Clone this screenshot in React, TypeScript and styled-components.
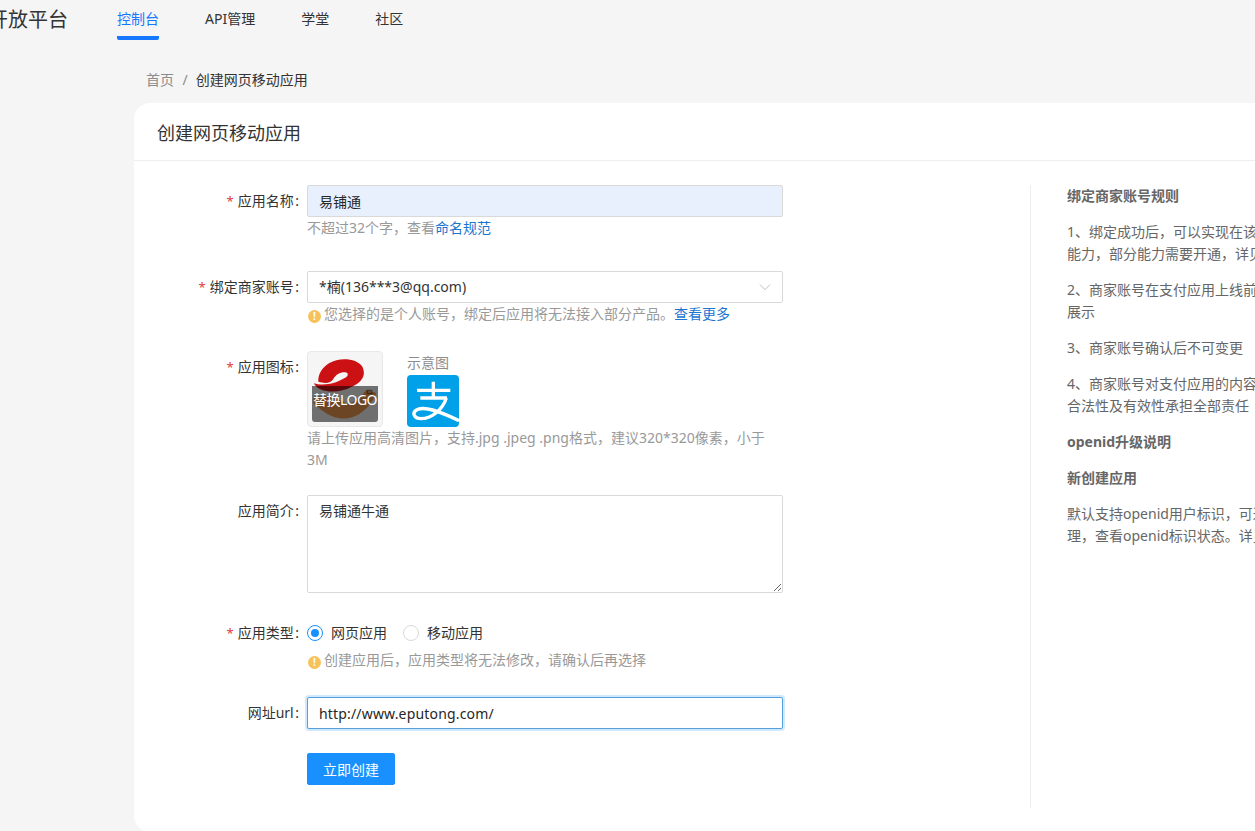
import React from 'react';
import styled, { createGlobalStyle } from 'styled-components';

const GlobalStyle = createGlobalStyle`
  html, body {
    margin: 0;
    padding: 0;
    background: #f5f5f5;
    overflow: hidden;
  }
  body, input, textarea, button {
    font-family: "Noto Sans", "Noto Sans CJK SC", sans-serif;
    font-size: 14px;
  }
`;

const AlipayLogo = () => (
  <svg width="52" height="52" viewBox="0 0 156 156">
    <g fill="none" stroke="#fff" strokeWidth="10">
      <path d="M30 46H130" />
      <path d="M79 20V70" />
      <path d="M40 69H120" />
      <path d="M118 69C106 106 72 131 42 131C20 131 14 112 30 104C52 93 92 106 156 137" />
    </g>
  </svg>
);

const AppLogo = () => (
  <svg width="74" height="74" viewBox="12 12 228 228">
    <path d="M28 150C55 142 95 150 130 170C155 172 175 150 192 128L222 138C205 185 160 222 110 216C75 212 45 185 28 168Z" fill="#f09a50" />
    <path d="M30 108C45 140 110 140 145 120C178 105 192 85 180 58C162 30 108 28 78 46C52 62 42 85 44 104C70 112 85 105 90 95C98 80 115 72 130 75C138 78 135 88 125 92C100 108 60 118 30 108Z" fill="#cc1114" />
    <path d="M195 130h14v10h-14z" fill="none" stroke="#333" strokeWidth="2" />
  </svg>
);

const Chevron = () => (
  <svg width="12" height="12" viewBox="0 0 12 12">
    <path d="M1 3.5L6 8.8L11 3.5" fill="none" stroke="#bfbfbf" strokeWidth="1" />
  </svg>
);

export default () => {
  return <Page>
    <GlobalStyle />
    <Header>
      <Brand>开放平台</Brand>
      <Nav>
        <NavItem $active>控制台</NavItem>
        <NavItem>API管理</NavItem>
        <NavItem>学堂</NavItem>
        <NavItem>社区</NavItem>
      </Nav>
    </Header>
    <Breadcrumb>
      <CrumbLink>首页</CrumbLink>
      <CrumbSep>/</CrumbSep>
      <span>创建网页移动应用</span>
    </Breadcrumb>
    <Card>
      <CardTitle>创建网页移动应用</CardTitle>
      <CardBody>
        <Form>
          <Field $gap={32}>
            <Label $required>应用名称<Colon>:</Colon></Label>
            <div>
              <TextInput $autofill defaultValue="易铺通" />
              <Help>不超过32个字&#xFF0C;查看<HelpLink>命名规范</HelpLink></Help>
            </div>
          </Field>
          <Field $gap={26}>
            <Label $required>绑定商家账号<Colon>:</Colon></Label>
            <div>
              <Select>
                <span>*楠(136***3@qq.com)</span>
                <Chevron />
              </Select>
              <Help><WarnIcon>!</WarnIcon>您选择的是个人账号&#xFF0C;绑定后应用将无法接入部分产品。<HelpLink>查看更多</HelpLink></Help>
            </div>
          </Field>
          <Field $gap={24}>
            <Label $required>应用图标<Colon>:</Colon></Label>
            <div>
              <IconRow>
                <LogoBox>
                  <AppLogo />
                  <LogoOverlay>替换LOGO</LogoOverlay>
                </LogoBox>
                <Sample>
                  <SampleText>示意图</SampleText>
                  <SampleTile><AlipayLogo /></SampleTile>
                </Sample>
              </IconRow>
              <Help>请上传应用高清图片&#xFF0C;支持.jpg .jpeg .png格式&#xFF0C;建议320*320像素&#xFF0C;小于3M</Help>
            </div>
          </Field>
          <Field $gap={24}>
            <Label>应用简介<Colon>:</Colon></Label>
            <TextArea defaultValue="易铺通牛通" />
          </Field>
          <Field $gap={26}>
            <Label $required>应用类型<Colon>:</Colon></Label>
            <div>
              <RadioGroup>
                <RadioItem><RadioDot $checked />网页应用</RadioItem>
                <RadioItem><RadioDot />移动应用</RadioItem>
              </RadioGroup>
              <Help><WarnIcon>!</WarnIcon>创建应用后&#xFF0C;应用类型将无法修改&#xFF0C;请确认后再选择</Help>
            </div>
          </Field>
          <Field $gap={24}>
            <Label>网址url<Colon>:</Colon></Label>
            <TextInput $focused defaultValue="http://www.eputong.com/" />
          </Field>
          <Field $gap={0}>
            <span />
            <SubmitButton>立即创建</SubmitButton>
          </Field>
        </Form>
        <Aside>
          <AsideHead>绑定商家账号规则</AsideHead>
          <AsideText>
            <span>1、绑定成功后&#xFF0C;可以实现在该应用下调用</span>
            <span>能力&#xFF0C;部分能力需要开通&#xFF0C;详见产品介绍</span>
          </AsideText>
          <AsideText>
            <span>2、商家账号在支付应用上线前需要完成签约</span>
            <span>展示</span>
          </AsideText>
          <AsideText>
            <span>3、商家账号确认后不可变更</span>
          </AsideText>
          <AsideText>
            <span>4、商家账号对支付应用的内容及服务的</span>
            <span>合法性及有效性承担全部责任</span>
          </AsideText>
          <AsideHead $offset>openid升级说明</AsideHead>
          <AsideHead>新创建应用</AsideHead>
          <AsideText>
            <span>默认支持openid用户标识&#xFF0C;可进入应用管</span>
            <span>理&#xFF0C;查看openid标识状态。详见文档</span>
          </AsideText>
        </Aside>
      </CardBody>
    </Card>
  </Page>;
}

const Page = styled.div`
  width: 1255px;
  height: 831px;
  overflow: hidden;
  color: #333;
  line-height: 22px;
`;

const Header = styled.header`
  display: flex;
  align-items: flex-start;
  height: 40px;
  gap: 49px;
  margin-left: -12px;
`;

const Brand = styled.div`
  font-size: 20px;
  line-height: 40px;
  color: #333;
  white-space: nowrap;
`;

const Nav = styled.nav`
  display: flex;
  gap: 46px;
`;

const NavItem = styled.a<{ $active?: boolean }>`
  height: 40px;
  line-height: 38px;
  box-sizing: border-box;
  color: ${p => p.$active ? '#1677ff' : '#333'};
  border-bottom: 4px solid ${p => p.$active ? '#1677ff' : 'transparent'};
  border-radius: 2px;
`;

const Breadcrumb = styled.div`
  display: flex;
  margin: 29px 0 12px 146px;
  color: #333;
`;

const CrumbLink = styled.a`
  color: #8c8c8c;
`;

const CrumbSep = styled.span`
  margin: 0 8px 0 8.5px;
  color: #8c8c8c;
`;

const Card = styled.section`
  width: 1400px;
  height: 729px;
  margin-left: 134px;
  background: #fff;
  border-radius: 16px;
`;

const CardTitle = styled.h1`
  margin: 0;
  height: 57px;
  padding-left: 23px;
  font-size: 18px;
  font-weight: 400;
  line-height: 60px;
  color: #333;
  border-bottom: 1px solid #eee;
`;

const CardBody = styled.div`
  display: flex;
  align-items: flex-start;
  padding-top: 24px;
`;

const Form = styled.div`
  width: 896px;
  flex: none;
`;

const Field = styled.div<{ $gap: number }>`
  display: grid;
  grid-template-columns: 166px 476px;
  column-gap: 7px;
  margin-bottom: ${p => p.$gap}px;
`;

const Label = styled.label<{ $required?: boolean }>`
  text-align: right;
  line-height: 32px;
  color: #333;
  white-space: nowrap;

  &::before {
    content: ${p => p.$required ? '"*"' : 'none'};
    color: #e4393c;
    margin-right: 4px;
    font-size: 13px;
  }
`;

const Colon = styled.span`
  margin-left: 1.5px;
  padding-right: 1px;
`;

const TextInput = styled.input<{ $autofill?: boolean; $focused?: boolean }>`
  display: block;
  width: 100%;
  height: 32px;
  box-sizing: border-box;
  padding: 0 11px;
  border: 1px solid ${p => p.$focused ? '#55a0dc' : '#d9d9d9'};
  border-radius: 2px;
  outline: none;
  color: #262626;
  letter-spacing: ${p => p.$focused ? '0.17px' : 'normal'};
  background: ${p => p.$autofill ? '#e8f0fe' : '#fff'};
  box-shadow: ${p => p.$focused ? '0 0 0 2px rgba(24, 144, 255, 0.2)' : 'none'};
`;

const Select = styled.div`
  display: flex;
  align-items: center;
  justify-content: space-between;
  height: 32px;
  box-sizing: border-box;
  padding: 0 11px;
  border: 1px solid #d9d9d9;
  border-radius: 2px;
  color: #333;
`;

const Help = styled.div`
  color: #999;
  line-height: 22px;
`;

const HelpLink = styled.a`
  color: #1b76d0;
`;

const WarnIcon = styled.i`
  display: inline-block;
  width: 13px;
  height: 13px;
  margin: 0 3px 0 1px;
  border-radius: 50%;
  background: #f7c25c;
  color: #fff;
  font-size: 10px;
  font-style: normal;
  font-weight: 700;
  line-height: 13px;
  text-align: center;
  vertical-align: -1px;
`;

const IconRow = styled.div`
  display: flex;
  gap: 24px;
`;

const LogoBox = styled.div`
  position: relative;
  display: flex;
  align-items: center;
  justify-content: center;
  width: 76px;
  height: 76px;
  box-sizing: border-box;
  border: 1px solid #e8e8e8;
  border-radius: 4px;
  background: #f5f5f5;
`;

const LogoOverlay = styled.div`
  position: absolute;
  left: 4px;
  right: 4px;
  top: 34px;
  height: 36px;
  border-radius: 0 0 3px 3px;
  background: rgba(0, 0, 0, 0.55);
  color: #fff;
  letter-spacing: -0.5px;
  line-height: 28px;
  text-align: center;
  white-space: nowrap;
`;

const Sample = styled.div`
  display: flex;
  flex-direction: column;
  justify-content: flex-end;
`;

const SampleText = styled.div`
  color: #8c8c8c;
  line-height: 24px;
`;

const SampleTile = styled.div`
  display: flex;
  width: 52px;
  height: 52px;
  border-radius: 4px;
  overflow: hidden;
  background: #00a1e9;
`;

const TextArea = styled.textarea`
  display: block;
  width: 100%;
  height: 98px;
  box-sizing: border-box;
  padding: 4px 11px;
  border: 1px solid #d9d9d9;
  border-radius: 2px;
  outline: none;
  color: #333;
  line-height: 22px;
  resize: vertical;
`;

const RadioGroup = styled.div`
  display: flex;
  gap: 16px;
  height: 32px;
  align-items: center;
`;

const RadioItem = styled.label`
  display: flex;
  align-items: center;
  gap: 8px;
  color: #333;
`;

const RadioDot = styled.span<{ $checked?: boolean }>`
  position: relative;
  width: 16px;
  height: 16px;
  box-sizing: border-box;
  border: 1px solid ${p => p.$checked ? '#1890ff' : '#d9d9d9'};
  border-radius: 50%;

  &::after {
    content: '';
    display: ${p => p.$checked ? 'block' : 'none'};
    position: absolute;
    inset: 3px;
    border-radius: 50%;
    background: #1890ff;
  }
`;

const SubmitButton = styled.button`
  width: 88px;
  height: 32px;
  padding: 0;
  border: 1px solid #1890ff;
  border-radius: 2px;
  background: #1890ff;
  color: #fff;
`;

const Aside = styled.aside`
  height: 623px;
  padding-left: 36px;
  border-left: 1px solid #eee;
  color: #666;
`;

const AsideHead = styled.div<{ $offset?: boolean }>`
  margin-top: ${p => p.$offset ? '1px' : '0'};
  margin-bottom: 14px;
  font-weight: 700;
`;

const AsideText = styled.div`
  margin-bottom: 14px;

  span {
    display: block;
    white-space: nowrap;
  }
`;
